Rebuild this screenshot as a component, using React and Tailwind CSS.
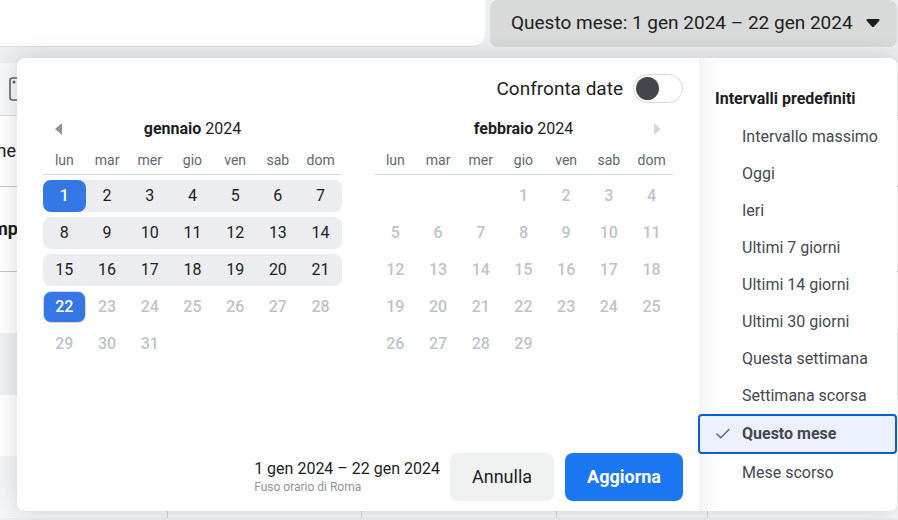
import React, { useState } from 'react';
import { Check } from 'lucide-react';

const WEEKDAYS = ['lun', 'mar', 'mer', 'gio', 'ven', 'sab', 'dom'];

const PRESETS = [
  'Intervallo massimo',
  'Oggi',
  'Ieri',
  'Ultimi 7 giorni',
  'Ultimi 14 giorni',
  'Ultimi 30 giorni',
  'Questa settimana',
  'Settimana scorsa',
  'Questo mese',
  'Mese scorso',
];

// Splits a month into weeks, offset = empty cells before day 1
function buildWeeks(offset, days) {
  const cells = [
    ...Array(offset).fill(null),
    ...Array.from({ length: days }, (_, i) => i + 1),
  ];
  while (cells.length % 7 !== 0) cells.push(null);
  const weeks = [];
  for (let i = 0; i < cells.length; i += 7) weeks.push(cells.slice(i, i + 7));
  return weeks;
}

export default function App() {
  const [preset, setPreset] = useState('Questo mese');

  return (
    <div
      className="relative min-h-screen overflow-hidden bg-[#eceef2] text-[#1c1e21]"
      style={{ fontFamily: 'Roboto, "Liberation Sans", sans-serif' }}
    >
      <TopBar />
      <ReportTable />

      <section className="absolute top-[58px] right-px left-[17px] flex rounded-lg bg-white shadow-[0_0_24px_rgba(0,0,0,0.16)]">
        <div className="flex flex-1 flex-col pt-4 pr-4 pb-2.5 pl-[26px]">
          <label className="flex items-center justify-end gap-2.5 text-[19px] leading-7">
            Confronta date
            <input
              type="checkbox"
              className="h-[29px] w-[50px] appearance-none rounded-full border border-[#d5d7da] bg-white before:mt-0.5 before:ml-0.5 before:block before:size-[23px] before:rounded-full before:bg-[#44484c] checked:before:ml-[23px]"
            />
          </label>

          <div className="mt-4 mr-2.5 flex gap-8">
            <Month name="gennaio" year={2024} weeks={buildWeeks(0, 31)} from={1} to={22} prev />
            <Month name="febbraio" year={2024} weeks={buildWeeks(3, 29)} from={0} to={0} />
          </div>

          <div className="mt-auto flex items-center justify-end">
            <div className="mr-2.5">
              <p className="text-base leading-5">1 gen 2024 – 22 gen 2024</p>
              <p className="text-xs leading-4 text-[#90949c]">Fuso orario di Roma</p>
            </div>
            <button className="mr-[11px] h-12 rounded-lg bg-[#f0f2f2] px-[22px] text-lg">
              Annulla
            </button>
            <button className="h-12 rounded-lg bg-[#1b76f2] px-[22px] text-lg font-bold text-white">
              Aggiorna
            </button>
          </div>
        </div>

        <aside className="w-[198px] rounded-r-lg bg-linear-to-r from-[#f3f4f5] to-white to-10% pt-[31px] pb-5">
          <h2 className="mb-[9px] px-4 text-base leading-5 font-bold">Intervalli predefiniti</h2>
          <ul>
            {PRESETS.map((label) => (
              <Preset
                key={label}
                label={label}
                active={label === preset}
                onSelect={() => setPreset(label)}
              />
            ))}
          </ul>
        </aside>
      </section>
    </div>
  );
}

function TopBar() {
  return (
    <header className="flex h-[47px] gap-[5px] pr-px">
      <div className="flex-1 rounded-br-xl border-b border-[#dcdddf] bg-white" />
      <button className="flex w-[407px] items-center justify-between rounded-lg bg-[#d8dada] pr-[17px] pb-px pl-[21px] text-[19px]">
        Questo mese: 1 gen 2024 – 22 gen 2024
        <svg width="14" height="8" viewBox="0 0 14 8" fill="currentColor">
          <path d="M2 0h10c1.5 0 2 1.1 1.1 2L8.2 7.4c-.7.7-1.7.7-2.4 0L.9 2C0 1.1.5 0 2 0z" />
        </svg>
      </button>
    </header>
  );
}

// The report behind the date picker
function ReportTable() {
  return (
    <div className="mt-4 bg-white text-lg">
      <div className="flex h-[53px] items-center border-b border-[#dadde1] bg-[#f7f8f9] pl-[9px]">
        <svg width="24" height="24" viewBox="0 0 24 24" fill="none" stroke="#5f646b" strokeWidth="1.6">
          <rect x="1" y="1" width="22" height="22" rx="2.5" />
          <circle cx="5" cy="5" r="1.5" fill="#5f646b" stroke="none" />
        </svg>
      </div>
      <div className="flex h-[71px] items-center border-b border-[#c4c8ce]">
        <span className="flex w-4 justify-end overflow-hidden">ne</span>
      </div>
      <div className="flex h-[85px] items-center border-b border-[#c4c8ce]">
        <span className="flex w-[18px] justify-end overflow-hidden font-bold">mp</span>
      </div>
      <div className="h-[61px]" />
      <div className="h-[62px] bg-[#f0f1f3]" />
      <div className="h-[61px]" />
      <div className="grid h-[62px] grid-cols-[168px_194px_195px_151px_1fr] bg-[#f5f6f8]">
        <div className="border-r border-[#d0d3d8]" />
        <div className="border-r border-[#d0d3d8]" />
        <div className="border-r border-[#d0d3d8]" />
        <div className="border-r border-[#d0d3d8]" />
      </div>
    </div>
  );
}

function Month({ name, year, weeks, from, to, prev }) {
  return (
    <div className="flex-1">
      <div className="grid h-5 grid-cols-[32px_1fr_32px] items-center">
        {prev ? (
          <button aria-label="Mese precedente" className="pl-3 text-[#8d949e]">
            <svg width="7" height="12" viewBox="0 0 7 12" fill="currentColor">
              <path d="M7 0v12L0 6z" />
            </svg>
          </button>
        ) : (
          <span />
        )}
        <h3 className="text-center text-base leading-5">
          <strong className="font-bold">{name}</strong> {year}
        </h3>
        {!prev && (
          <button aria-label="Mese successivo" disabled className="flex justify-end pr-3 text-[#d5d8dc]">
            <svg width="7" height="12" viewBox="0 0 7 12" fill="currentColor">
              <path d="M0 0v12l7-6z" />
            </svg>
          </button>
        )}
      </div>
      <table className="mt-[7px] w-full table-fixed border-separate border-spacing-x-0 border-spacing-y-[5px]">
        <thead>
          <tr>
            {WEEKDAYS.map((day) => (
              <th
                key={day}
                className="h-6 border-b border-[#d5d8dc] pb-1.5 text-sm leading-4 font-normal text-[#606770]"
              >
                {day}
              </th>
            ))}
          </tr>
        </thead>
        <tbody>
          {weeks.map((week, i) => (
            <tr key={i}>
              {week.map((day, j) => (
                <Day key={j} day={day} from={from} to={to} />
              ))}
            </tr>
          ))}
        </tbody>
      </table>
    </div>
  );
}

function Day({ day, from, to }) {
  if (!day) return <td className="h-8 p-0" />;

  const edge = day === from || day === to;
  const inRange = day >= from && day <= to;
  let style = 'font-medium text-[#bec3c9]';
  if (edge) style = 'rounded-lg bg-[#3578e5] font-medium text-white';
  else if (inRange) style = 'text-[#1c1e21]';

  return (
    <td
      className={`h-8 p-0 first:rounded-l-lg last:rounded-r-lg ${
        inRange && day !== to ? 'bg-[#ebedf0]' : ''
      }`}
    >
      <button
        className={`block h-8 w-full text-base ${style} ${
          day === to ? 'border border-[#d5d8dc]' : ''
        }`}
      >
        {day}
      </button>
    </td>
  );
}

function Preset({ label, active, onSelect }) {
  return (
    <li className={active ? '-ml-px' : ''}>
      <button
        onClick={onSelect}
        className={`flex w-full items-center text-base text-[#444950] ${
          active
            ? 'h-10 rounded-sm border-2 border-[#0a5fd0] bg-[#ecf1fd] pl-3.5 font-bold'
            : 'h-[37px] pl-[43px]'
        }`}
      >
        {active && <Check size={18} strokeWidth={2} className="mr-2.5 text-[#606770]" />}
        {label}
      </button>
    </li>
  );
}
